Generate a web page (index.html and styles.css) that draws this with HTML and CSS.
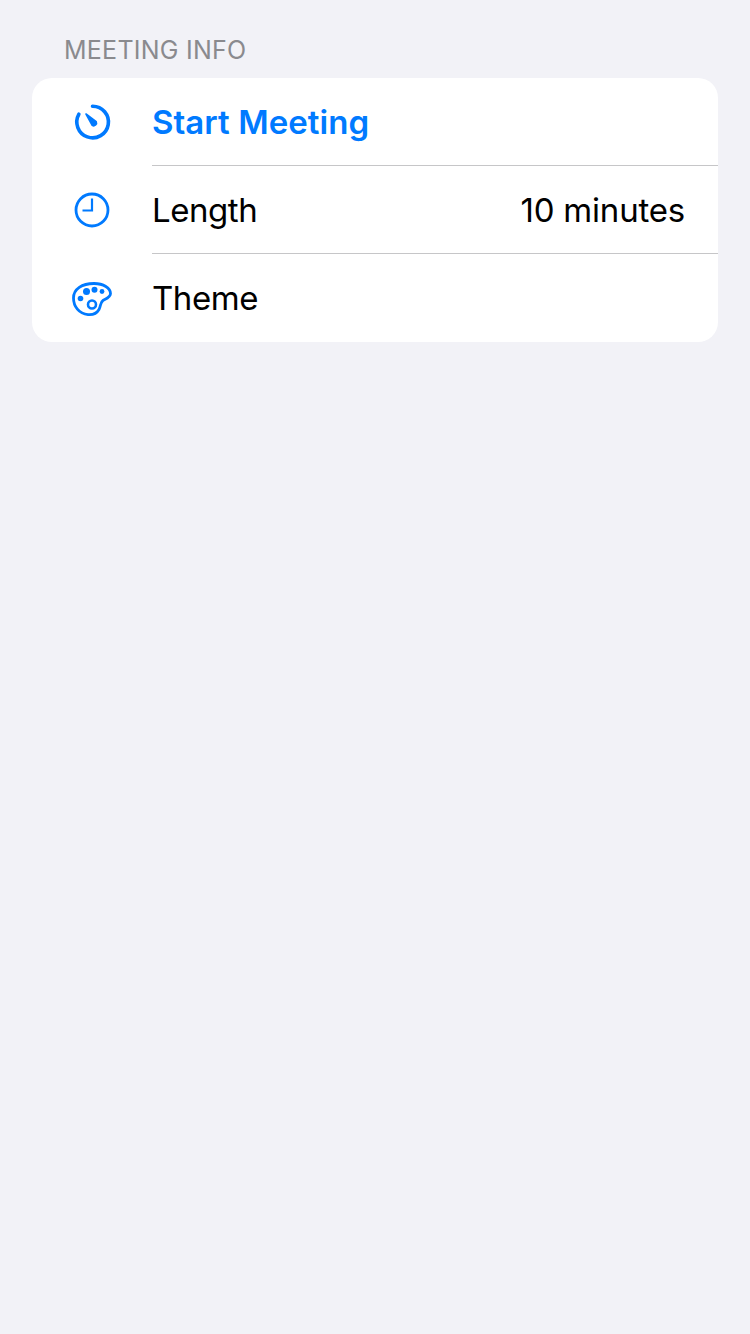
FILE: index.html
```html
<!DOCTYPE html>
<html lang="en">
<head>
  <meta charset="UTF-8">
  <meta name="viewport" content="width=device-width, initial-scale=1.0">
  <title>Meeting Info</title>
  <link rel="stylesheet" href="styles.css">
</head>
<body>
<section class="group">
  <h2 class="group-title">MEETING INFO</h2>
  <div class="card">
    <div class="row">
      <span class="row-icon">
        <svg width="44" height="44" viewBox="0 0 44 44" fill="none" stroke="#007aff">
          <path d="M22.5 6.2A15.8 15.8 0 1 1 8.9 14.2" stroke-width="3.6" stroke-linecap="round"/>
          <path d="M16 14 26.2 21.6A2.9 2.9 0 0 1 22.2 25.4Z" fill="#007aff" stroke-width="1.6" stroke-linejoin="round"/>
        </svg>
      </span>
      <div class="row-body">
        <span class="row-action">Start Meeting</span>
      </div>
    </div>
    <div class="row">
      <span class="row-icon">
        <svg width="44" height="44" viewBox="0 0 44 44" fill="none" stroke="#007aff">
          <circle cx="22" cy="22" r="16" stroke-width="2.8"/>
          <path d="M22 10.5V22.5H12.5" stroke-width="2.2"/>
        </svg>
      </span>
      <div class="row-body">
        <span>Length</span>
        <span class="row-value">10 minutes</span>
      </div>
    </div>
    <div class="row">
      <span class="row-icon">
        <svg width="44" height="44" viewBox="0 0 44 44" fill="none" stroke="#007aff">
          <path d="M3.5 22C3.5 13 12 7.5 24 7.5C33.5 7.5 40.5 12 40.5 17.5C40.5 21.5 35.5 23 33 24.5C30 26.5 31 30 29 33.5C27 37 22.5 39 18 38.6C9 37.8 3.5 30.5 3.5 22Z" stroke-width="2.8"/>
          <circle cx="22" cy="28.5" r="4" stroke-width="2.6"/>
          <circle cx="10.5" cy="22.5" r="2.8" fill="#007aff" stroke="none"/>
          <circle cx="16.5" cy="15.5" r="3.5" fill="#007aff" stroke="none"/>
          <circle cx="24.5" cy="13.7" r="3" fill="#007aff" stroke="none"/>
          <circle cx="32" cy="15.5" r="2.4" fill="#007aff" stroke="none"/>
        </svg>
      </span>
      <div class="row-body">
        <span>Theme</span>
      </div>
    </div>
  </div>
</section>
</body>
</html>
```

FILE: styles.css
```css
* {
  padding: 0;
  margin: 0;
  box-sizing: border-box;
}

body {
  height: 100vh;
  background-color: #f2f2f7;
  font-family: Inter, "Liberation Sans", sans-serif;
  color: #000;
}

.group {
  padding: 34px 32px 0;
}

.group-title {
  padding-left: 32px;
  height: 44px;
  font-size: 25px;
  line-height: 32px;
  font-weight: 400;
  letter-spacing: 0.25px;
  color: #8a8a8e;
}

.card {
  background-color: #fff;
  border-radius: 20px;
  overflow: hidden;
}

.row {
  display: flex;
  height: 88px;
}

.row-icon {
  display: flex;
  justify-content: center;
  align-items: center;
  flex: none;
  width: 120px;
}

.row-body {
  display: flex;
  flex: 1;
  justify-content: space-between;
  align-items: center;
  padding-right: 33px;
  font-size: 33px;
  letter-spacing: -0.45px;
}

.row:not(:last-child) .row-body {
  border-bottom: 1px solid #c6c6c8;
}

.row-action {
  font-weight: 600;
  letter-spacing: 0.05px;
  color: #007aff;
}

.row-value {
  letter-spacing: -0.2px;
}
```
